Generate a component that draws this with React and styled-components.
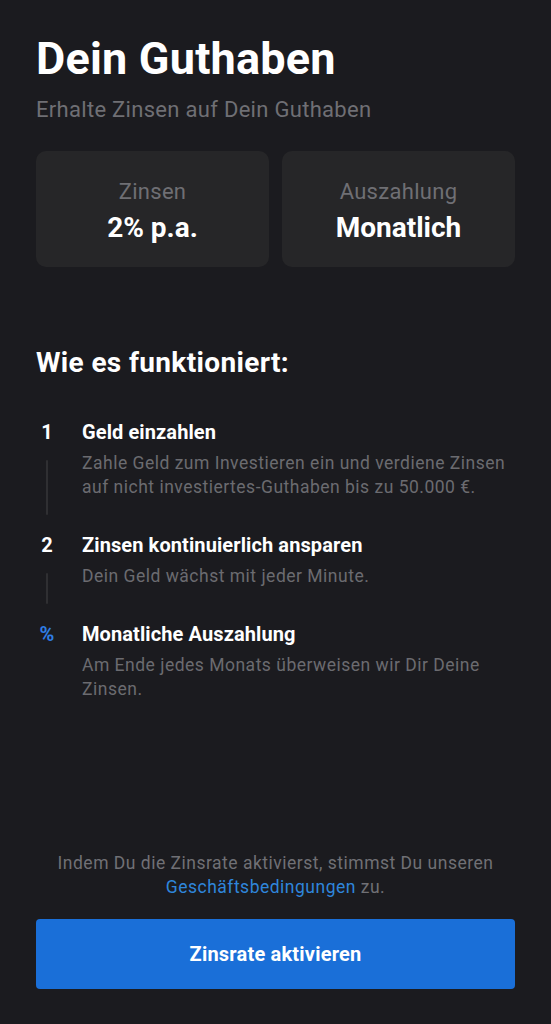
import React from "react";
import styled, { createGlobalStyle } from "styled-components";

const Global = createGlobalStyle`
  html, body { margin: 0; padding: 0; background: #1b1b1f; }
  body { font-family: Roboto, "Liberation Sans", sans-serif; -webkit-font-smoothing: antialiased; }
  * { box-sizing: border-box; }
`;

const Page = styled.div`
  width: 551px;
  height: 1024px;
  background: #1b1b1f;
  padding: 33px 36px 35px;
  display: flex;
  flex-direction: column;
  color: #fff;
`;

const Title = styled.h1`
  margin: 0;
  font-size: 45px;
  font-weight: 700;
  line-height: 52px;
  letter-spacing: 0.2px;
`;

const Subtitle = styled.p`
  margin: 12px 0 0;
  font-size: 22px;
  line-height: 26px;
  color: #6f6f74;
  letter-spacing: 0.3px;
`;

const Cards = styled.div`
  margin-top: 28px;
  display: grid;
  grid-template-columns: 1fr 1fr;
  gap: 13px;
`;

const Card = styled.div`
  height: 116px;
  background: #262628;
  border-radius: 10px;
  padding-top: 28px;
  display: flex;
  flex-direction: column;
  align-items: center;
  gap: 7px;
`;

const CardLabel = styled.div`
  font-size: 22px;
  line-height: 26px;
  color: #6f6f74;
  letter-spacing: 0.3px;
`;

const CardValue = styled.div`
  font-size: 28px;
  line-height: 32px;
  font-weight: 700;
  color: #fff;
`;

const SectionTitle = styled.h2`
  margin: 79px 0 0;
  font-size: 28px;
  line-height: 34px;
  font-weight: 700;
  letter-spacing: 0.35px;
`;

const Steps = styled.div`
  margin-top: 39px;
  display: flex;
  flex-direction: column;
`;

const Step = styled.div`
  display: grid;
  grid-template-columns: 46px 1fr;
`;

const Marker = styled.div`
  display: flex;
  flex-direction: column;
  align-items: flex-start;
`;

const MarkerGlyph = styled.div`
  width: 22px;
  text-align: center;
  font-size: 20px;
  line-height: 26px;
  font-weight: 700;
  color: ${(p) => p.$color || "#fff"};
`;

const Line = styled.div`
  width: 2px;
  flex: 1;
  margin: 15px 0 17px 10px;
  background: #2f2f32;
  border-radius: 1px;
`;

const StepBody = styled.div`
  display: flex;
  flex-direction: column;
  padding-bottom: ${(p) => (p.$last ? 0 : 33)}px;
`;

const StepTitle = styled.div`
  font-size: 20px;
  line-height: 26px;
  font-weight: 700;
  color: #fff;
  letter-spacing: 0.1px;
`;

const StepText = styled.div`
  margin-top: 6px;
  font-size: 17.5px;
  line-height: 24px;
  color: #6b6b70;
  letter-spacing: 0.5px;
`;

const Spacer = styled.div`
  flex: 1;
`;

const Terms = styled.p`
  margin: 0 0 20px;
  text-align: center;
  font-size: 17.5px;
  line-height: 24px;
  color: #707075;
  letter-spacing: 0.5px;
`;

const Link = styled.a`
  color: #2f86db;
  text-decoration: none;
`;

const Button = styled.button`
  flex: none;
  height: 70px;
  width: 100%;
  border: none;
  border-radius: 4px;
  background: #1a6fd8;
  color: #fff;
  font-family: inherit;
  font-size: 20px;
  font-weight: 700;
  letter-spacing: 0.2px;
`;

const steps = [
  {
    mark: "1",
    title: "Geld einzahlen",
    text: (
      <>
        Zahle Geld zum Investieren ein und verdiene Zinsen
        <br />
        auf nicht investiertes-Guthaben bis zu 50.000 €.
      </>
    ),
  },
  { mark: "2", title: "Zinsen kontinuierlich ansparen", text: "Dein Geld wächst mit jeder Minute." },
  {
    mark: "%",
    color: "#2f7ee6",
    title: "Monatliche Auszahlung",
    text: (
      <>
        Am Ende jedes Monats überweisen wir Dir Deine
        <br />
        Zinsen.
      </>
    ),
  },
];

export default function App() {
  return (
    <>
      <Global />
      <Page>
        <Title>Dein Guthaben</Title>
        <Subtitle>Erhalte Zinsen auf Dein Guthaben</Subtitle>
        <Cards>
          <Card>
            <CardLabel>Zinsen</CardLabel>
            <CardValue>2% p.a.</CardValue>
          </Card>
          <Card>
            <CardLabel>Auszahlung</CardLabel>
            <CardValue>Monatlich</CardValue>
          </Card>
        </Cards>
        <SectionTitle>Wie es funktioniert:</SectionTitle>
        <Steps>
          {steps.map((s, i) => {
            const last = i === steps.length - 1;
            return (
              <Step key={i}>
                <Marker>
                  <MarkerGlyph $color={s.color}>{s.mark}</MarkerGlyph>
                  {!last && <Line />}
                </Marker>
                <StepBody $last={last}>
                  <StepTitle>{s.title}</StepTitle>
                  <StepText>{s.text}</StepText>
                </StepBody>
              </Step>
            );
          })}
        </Steps>
        <Spacer />
        <Terms>
          Indem Du die Zinsrate aktivierst, stimmst Du unseren
          <br />
          <Link href="#">Geschäftsbedingungen</Link> zu.
        </Terms>
        <Button>Zinsrate aktivieren</Button>
      </Page>
    </>
  );
}
